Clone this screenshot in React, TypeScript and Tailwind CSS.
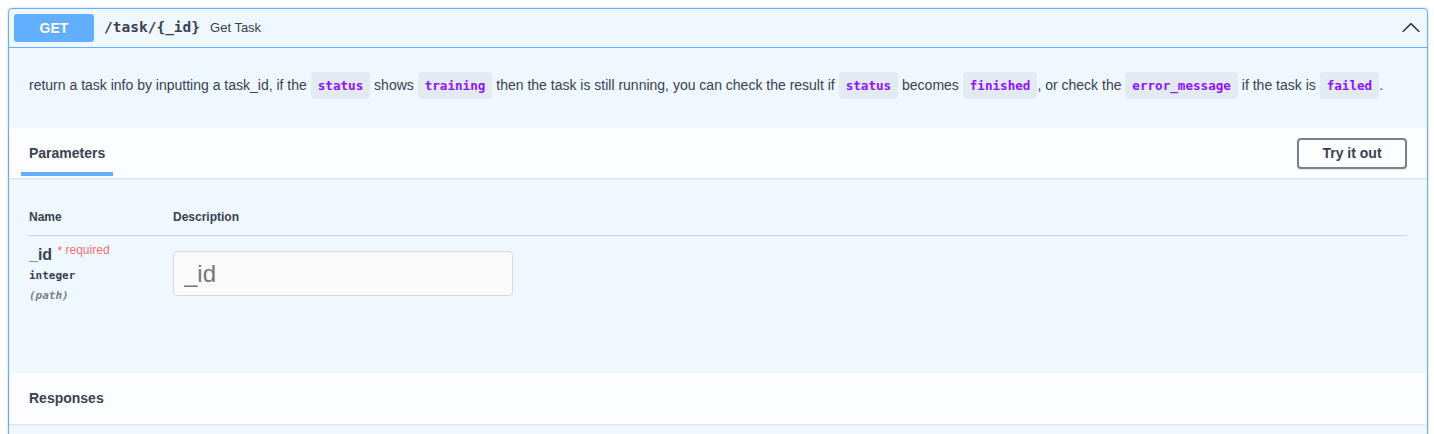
import React from 'react';

const sans = { fontFamily: '"Liberation Sans", Arial, sans-serif' };
const mono = '[font-family:"DejaVu_Sans_Mono",monospace]';

const Code = ({ children }: { children: React.ReactNode }) => (
  <code className={`${mono} text-[12.6px] font-semibold text-[#9012fe] bg-[rgba(0,0,0,0.05)] rounded-[4px] px-[7px] py-[6px]`}>
    {children}
  </code>
);

const App = () => {
  return (
    <div className="bg-white min-h-screen pt-2 pl-2 pr-[6px]" style={sans}>
      <div className="border border-[#61affe] rounded-[4px] bg-[#eff7ff] shadow-[0_0_3px_rgba(0,0,0,0.19)] text-[#3b4151]">
        {/* summary */}
        <div className="flex items-center p-[5px] border-b border-[#61affe]">
          <span className="w-[80px] h-[28px] rounded-[3px] bg-[#61affe] text-white font-bold text-[14px] flex items-center justify-center [text-shadow:0_1px_0_rgba(0,0,0,0.1)]">
            GET
          </span>
          <span className={`${mono} ml-[10px] font-bold text-[14.5px] text-[#3b4151]`}>/task/{'{'}_id{'}'}</span>
          <span className="ml-[10px] text-[13px] text-[#3b4151]">Get Task</span>
          <svg className="ml-auto mr-[1px]" width="20" height="20" viewBox="0 0 20 20" fill="#303030">
            <path
              transform="rotate(180 10 10)"
              d="M17.418 6.109c.272-.268.709-.268.979 0s.271.701 0 .969l-7.908 7.83c-.27.268-.707.268-.979 0l-7.908-7.83c-.27-.268-.27-.701 0-.969.271-.268.709-.268.979 0L10 13.25l7.418-7.141z"
            />
          </svg>
        </div>

        {/* description */}
        <div className="h-[80px] flex items-center px-5 pb-[6px]">
          <p className="text-[14px] leading-[28px]">
            return a task info by inputting a task_id, if the <Code>status</Code> shows <Code>training</Code> then the task is
            still running, you can check the result if <Code>status</Code> becomes <Code>finished</Code>, or check the{' '}
            <Code>error_message</Code> if the task is <Code>failed</Code>.
          </p>
        </div>

        {/* parameters header */}
        <div className="h-[50px] flex items-center justify-between pl-[12px] pr-5 bg-[#fbfdff] shadow-[0_1px_2px_rgba(0,0,0,0.1)]">
          <div className="relative h-full flex items-center px-2">
            <h4 className="text-[14px] font-bold">Parameters</h4>
            <div className="absolute left-0 right-0 bottom-[2px] h-1 bg-[#61affe]" />
          </div>
          <button className="w-[110px] h-[31px] border-2 border-[#808080] rounded-[4px] text-[14px] font-bold text-[#3b4151] shadow-[0_1px_2px_rgba(0,0,0,0.1)] bg-transparent">
            Try it out
          </button>
        </div>

        {/* parameters body */}
        <div className="h-[195px] px-5 pt-5">
          <div className="flex h-[38px] items-center border-b border-[rgba(59,65,81,0.2)] text-[12px] font-bold">
            <div className="w-[144px]">Name</div>
            <div>Description</div>
          </div>
          <div className="flex">
            <div className="w-[144px] pt-[9px] flex flex-col">
              <div className="flex items-start h-[20px]">
                <span className="text-[16px] font-bold leading-[20px]">_id</span>
                <span className="text-[12px] text-[rgba(255,0,0,0.6)] ml-[5px] leading-[13px] -mt-[2px]">
                  <span className="relative top-[1px] text-[13px]">*</span> required
                </span>
              </div>
              <div className={`${mono} text-[11px] font-semibold leading-[20px] mt-[1px]`}>integer</div>
              <div className={`${mono} text-[11px] italic font-semibold text-[#808080] leading-[20px]`}>(path)</div>
            </div>
            <div className="pt-[15px]">
              <input
                placeholder="_id"
                className="w-[340px] h-[45px] bg-[#fafafa] border border-[#d9d9d9] rounded-[4px] pl-[10px] text-[24px] placeholder:text-[#767676] outline-none"
                style={sans}
              />
            </div>
          </div>
        </div>

        {/* responses header */}
        <div className="h-[51px] flex items-center px-5 bg-[#fbfdff] shadow-[0_1px_2px_rgba(0,0,0,0.1)]">
          <h4 className="text-[14px] font-bold">Responses</h4>
        </div>
        <div className="h-[60px]" />
      </div>
    </div>
  );
};

export default App;
